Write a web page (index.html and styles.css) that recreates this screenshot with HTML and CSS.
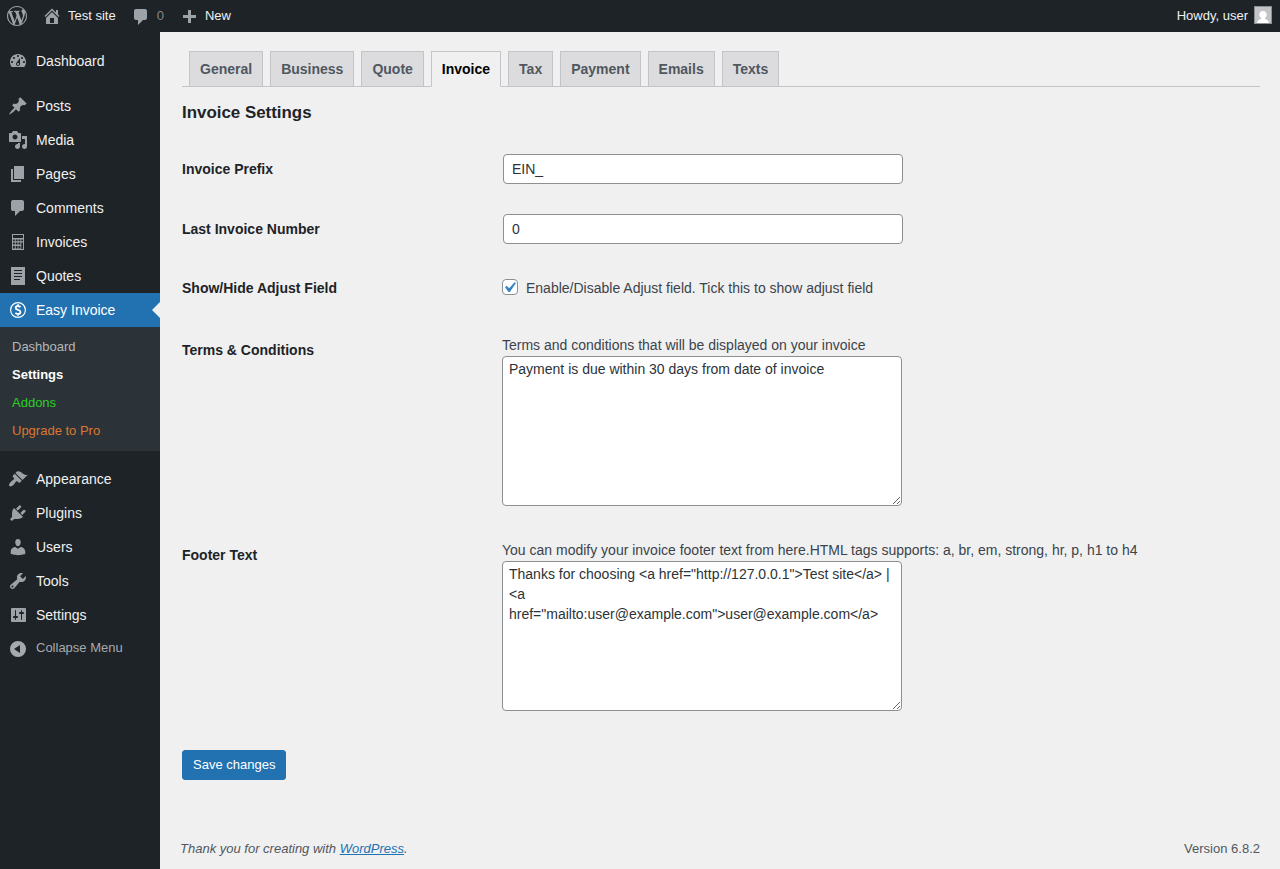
FILE: index.html
```html
<!DOCTYPE html>
<html lang="en">
<head>
<meta charset="utf-8">
<title>Invoice Settings</title>
<link rel="stylesheet" href="styles.css">
</head>
<body>
<header class="adminbar">
  <a class="bar-logo"><svg class="icon" viewBox="0 0 20 20"><path d="M20 10c0-5.51-4.49-10-10-10C4.48 0 0 4.49 0 10c0 5.52 4.48 10 10 10 5.51 0 10-4.48 10-10zM7.78 15.37L4.37 6.22c.55-.02 1.17-.08 1.17-.08.5-.06.44-1.13-.06-1.11 0 0-1.45.11-2.37.11-.18 0-.37 0-.58-.01C4.12 2.69 6.87 1.11 10 1.11c2.33 0 4.45.87 6.05 2.34-.68-.11-1.65.39-1.65 1.58 0 .74.45 1.36.9 2.1.35.61.55 1.36.55 2.46 0 1.49-1.4 5-1.4 5l-3.03-8.37c.54-.02.82-.17.82-.17.5-.05.44-1.25-.06-1.22 0 0-1.44.12-2.38.12-.87 0-2.33-.12-2.33-.12-.5-.03-.56 1.2-.06 1.22l.92.08 1.26 3.41zM17.41 10c.24-.64.74-1.87.43-4.25.7 1.29 1.05 2.71 1.05 4.25 0 3.29-1.73 6.24-4.4 7.78.97-2.59 1.94-5.2 2.92-7.78zM6.1 18.09C3.12 16.65 1.11 13.53 1.11 10c0-1.3.23-2.48.72-3.59C3.25 10.3 4.67 14.2 6.1 18.09zm4.03-6.63l2.58 6.98c-.86.29-1.76.45-2.71.45-.79 0-1.57-.11-2.29-.33.81-2.38 1.62-4.74 2.42-7.1z"/></svg></a>
  <a class="bar-item bar-site"><svg class="icon" viewBox="0 0 20 20"><path d="M16 8.5l1.53 1.53-1.06 1.06L10 4.6l-6.47 6.47-1.06-1.06L10 2.47l4 4V4h2v4.5zm-6-2.46l6 5.99V18H4v-5.97zM12 17v-5H8v5h4z"/></svg><span>Test site</span></a>
  <a class="bar-item bar-comments"><svg class="icon" viewBox="0 0 20 20"><path d="M5 2h9c1.1 0 2 .9 2 2v7c0 1.1-.9 2-2 2h-2l-5 5v-5H5c-1.1 0-2-.9-2-2V4c0-1.1.9-2 2-2z"/></svg><span>0</span></a>
  <a class="bar-item bar-new"><svg class="icon" viewBox="0 0 20 20"><path d="M17 7v3h-5v5H9v-5H4V7h5V2h3v5h5z"/></svg><span>New</span></a>
  <a class="bar-user"><span>Howdy, user</span><svg class="avatar" viewBox="0 0 18 18"><rect x=".5" y=".5" width="17" height="17" fill="#c3c4c7" stroke="#8c8f94"/><path fill="#fff" d="M9 5c2.300 0 3.700 1.500 3.700 3.600 0 1.500-.7 2.700-1.700 3.500v.8c2.200.4 3.600 1.400 4 4.100H3c.4-2.700 1.800-3.700 4-4.100v-.8c-1-.8-1.700-2-1.700-3.500C5.300 6.500 6.700 5 9 5z"/></svg></a>
</header>
<div class="layout">
  <nav class="menu">
    <a class="menu-item"><svg class="icon" viewBox="0 0 20 20"><path d="M3.76 16h12.48c1.1-1.37 1.76-3.11 1.76-5 0-4.42-3.58-8-8-8s-8 3.580-8 8c0 1.890.66 3.630 1.760 5zM10 4c.55 0 1 .45 1 1s-.45 1-1 1-1-.45-1-1 .45-1 1-1zM6 6c.55 0 1 .45 1 1s-.45 1-1 1-1-.45-1-1 .45-1 1-1zm8 0c.55 0 1 .45 1 1s-.45 1-1 1-1-.45-1-1 .45-1 1-1zm-5.370 5.550L12 7v6c0 1.100-.9 2-2 2s-2-.9-2-2c0-.57.24-1.080.63-1.450zM4 10c.55 0 1 .45 1 1s-.45 1-1 1-1-.45-1-1 .45-1 1-1zm12 0c.55 0 1 .45 1 1s-.45 1-1 1-1-.45-1-1 .45-1 1-1zm-5 3c0-.55-.45-1-1-1s-1 .45-1 1 .45 1 1 1 1-.45 1-1z"/></svg>Dashboard</a>
    <div class="separator"></div>
    <a class="menu-item"><svg class="icon" viewBox="0 0 20 20"><path d="M10.44 3.02l1.82-1.82 6.36 6.35-1.83 1.82c-1.05-.68-2.48-.57-3.41.36l-.75.75c-.92.93-1.04 2.35-.35 3.41l-1.83 1.82-2.41-2.41-2.8 2.79c-.42.42-3.38 2.71-3.8 2.29s1.86-3.39 2.28-3.81l2.79-2.79L4.1 9.36l1.83-1.82c1.05.69 2.48.57 3.4-.36l.75-.75c.93-.92 1.05-2.35.36-3.41z"/></svg>Posts</a>
    <a class="menu-item"><svg class="icon" viewBox="0 0 20 20"><path d="M13 11V4c0-.55-.45-1-1-1h-1.67L9 1H5L3.67 3H2c-.55 0-1 .45-1 1v7c0 .55.45 1 1 1h10c.55 0 1-.45 1-1zM7 4.500c1.380 0 2.500 1.120 2.500 2.500S8.380 9.500 7 9.500 4.500 8.380 4.500 7 5.620 4.500 7 4.500zM14 6h5v10.500c0 1.380-1.120 2.500-2.500 2.500S14 17.880 14 16.500s1.120-2.500 2.500-2.500c.17 0 .34.02.5.05V9h-3V6zm-4 8.050V13h2v3.500c0 1.380-1.120 2.500-2.500 2.500S7 17.880 7 16.500 8.120 14 9.500 14c.17 0 .34.02.5.05z"/></svg>Media</a>
    <a class="menu-item"><svg class="icon" viewBox="0 0 20 20"><path d="M6 15V2h10v13H6zm-1 1h8v2H3V5h2v11z"/></svg>Pages</a>
    <a class="menu-item"><svg class="icon" viewBox="0 0 20 20"><path d="M5 2h9c1.1 0 2 .9 2 2v7c0 1.1-.9 2-2 2h-2l-5 5v-5H5c-1.1 0-2-.9-2-2V4c0-1.1.9-2 2-2z"/></svg>Comments</a>
    <a class="menu-item"><svg class="icon" viewBox="0 0 20 20"><path fill-rule="evenodd" d="M4 2h12v16H4zM5 3v3h10V3zM5 7.500v1.700h1.800V7.500zm2.700 0v1.700h1.900V7.500zm2.800 0v1.700h1.900V7.500zm2.800 0v1.700H15V7.500zM5 10.500v1.900h1.800v-1.900zm2.700 0v1.900h1.900v-1.900zm2.800 0v1.900h1.900v-1.900zm2.800 0V17H15v-6.500zM5 14v2.500h1.800V14zm2.700 0v2.500h1.900V14zm2.800 0v2.500h1.900V14z"/></svg>Invoices</a>
    <a class="menu-item"><svg class="icon" viewBox="0 0 20 20"><path fill-rule="evenodd" d="M3 1h14v18H3zM6 4v1h8V4zm0 3v1h8V7zm0 3v1h8v-1zm0 3v1h6v-1z"/></svg>Quotes</a>
    <a class="menu-item current"><svg class="icon" viewBox="0 0 20 20"><g fill="none" stroke="currentColor"><circle cx="10" cy="10" r="7.400" stroke-width="1.200"/><path stroke-width="1.800" d="M12.500 7.300C12 6.400 11.100 6 10 6c-1.500 0-2.300.8-2.300 1.900 0 2.500 4.800 1.500 4.800 4.100 0 1.200-1 2-2.500 2-1.200 0-2.100-.5-2.600-1.300M10 4.200v2M10 13.800v2"/></g></svg>Easy Invoice</a>
    <div class="submenu">
      <a>Dashboard</a>
      <a class="active">Settings</a>
      <a class="addons">Addons</a>
      <a class="upgrade">Upgrade to Pro</a>
    </div>
    <div class="separator"></div>
    <a class="menu-item"><svg class="icon" viewBox="0 0 20 20"><path d="M14.48 11.06L7.41 3.99l1.5-1.5c.5-.56 2.3-.47 3.51.32 1.21.8 1.43 1.28 2.91 2.1 1.18.64 2.45 1.26 4.45.85zm-.71.71L6.7 4.7 4.93 6.47c-.39.39-.39 1.02 0 1.41l1.06 1.06c.39.39.39 1.03 0 1.42-.6.6-1.43 1.11-2.21 1.69-.35.26-.7.53-1.01.84C1.43 14.23.4 16.08 1.4 17.07c.99 1 2.84-.03 4.18-1.36.31-.31.58-.66.85-1.02.57-.78 1.08-1.61 1.69-2.21.39-.39 1.02-.39 1.41 0l1.06 1.06c.39.39 1.02.39 1.41 0z"/></svg>Appearance</a>
    <a class="menu-item"><svg class="icon" viewBox="0 0 20 20"><path d="M13.11 4.36L9.87 7.6 8 5.73l3.24-3.24c.35-.34 1.05-.2 1.56.32.52.51.66 1.21.31 1.55zm-8 1.77l.91-1.12 9.01 9.01-1.19.84c-.71.71-2.63 1.16-3.82 1.16H6.14L4.9 17.26c-.59.59-1.54.59-2.12 0-.59-.58-.59-1.53 0-2.12l1.24-1.24v-3.88c0-1.13.4-3.19 1.09-3.89zm7.26 3.97l3.24-3.24c.34-.35 1.04-.21 1.55.31.52.51.66 1.21.31 1.55l-3.24 3.25z"/></svg>Plugins</a>
    <a class="menu-item"><svg class="icon" viewBox="0 0 20 20"><path d="M10 9.25c-2.27 0-2.73-3.44-2.73-3.44C7 4.02 7.82 2 9.97 2c2.16 0 2.98 2.02 2.71 3.81 0 0-.41 3.44-2.68 3.44zm0 2.57L12.72 10c2.39 0 4.52 2.33 4.52 4.53v2.49s-3.65 1.13-7.24 1.13c-3.65 0-7.24-1.13-7.24-1.13v-2.49c0-2.25 1.94-4.48 4.47-4.48z"/></svg>Users</a>
    <a class="menu-item"><svg class="icon" viewBox="0 0 20 20"><path d="M16.68 9.77c-1.34 1.34-3.3 1.67-4.95.99l-5.41 6.52c-.99.99-2.59.99-3.58 0s-.99-2.59 0-3.57l6.52-5.42c-.68-1.65-.35-3.61.99-4.95 1.28-1.28 3.12-1.62 4.72-1.06l-2.89 2.89 2.82 2.82 2.86-2.87c.53 1.58.18 3.39-1.08 4.65zM3.81 16.21c.4.39 1.04.39 1.43 0 .4-.4.4-1.04 0-1.43-.39-.4-1.03-.4-1.43 0-.39.39-.39 1.03 0 1.43z"/></svg>Tools</a>
    <a class="menu-item"><svg class="icon" viewBox="0 0 20 20"><path d="M18 16V4c0-.55-.45-1-1-1H4c-.55 0-1 .45-1 1v12c0 .55.45 1 1 1h13c.55 0 1-.45 1-1zM8 11h1c.55 0 1 .45 1 1s-.45 1-1 1H8v1.500c0 .28-.22.5-.5.5s-.5-.22-.5-.5V13H6c-.55 0-1-.45-1-1s.45-1 1-1h1V5.500c0-.28.22-.5.5-.5s.5.22.5.5V11zm5-2h-1c-.55 0-1-.45-1-1s.45-1 1-1h1V5.500c0-.28.22-.5.5-.5s.5.22.5.5V7h1c.55 0 1 .45 1 1s-.45 1-1 1h-1v5.500c0 .28-.22.5-.5.5s-.5-.22-.5-.5V9z"/></svg>Settings</a>
    <a class="menu-item collapse"><svg class="icon" viewBox="0 0 20 20"><path fill-rule="evenodd" d="M10 2a8 8 0 1 1 0 16a8 8 0 0 1 0-16zM12 6l-6 4 6 4z"/></svg><span>Collapse Menu</span></a>
  </nav>
  <main class="content">
    <div class="tabs">
      <a class="tab">General</a><a class="tab">Business</a><a class="tab">Quote</a><a class="tab selected">Invoice</a><a class="tab">Tax</a><a class="tab">Payment</a><a class="tab">Emails</a><a class="tab">Texts</a>
    </div>
    <h2 class="title">Invoice Settings</h2>
    <form class="form">
      <div class="row row-input"><label class="label">Invoice Prefix</label><div class="field"><input class="text" type="text" value="EIN_"></div></div>
      <div class="row row-input"><label class="label">Last Invoice Number</label><div class="field"><input class="text" type="text" value="0"></div></div>
      <div class="row row-check"><label class="label">Show/Hide Adjust Field</label><div class="field"><span class="check"><svg class="tick" viewBox="0 0 20 20"><path d="M14.83 4.89l1.34.94-5.81 8.38H9.02L5.78 9.67l1.34-1.25 2.57 2.4z"/></svg></span><span class="desc">Enable/Disable Adjust field. Tick this to show adjust field</span></div></div>
      <div class="row row-area"><label class="label">Terms &amp; Conditions</label><div class="field"><div class="desc">Terms and conditions that will be displayed on your invoice</div><textarea class="area" spellcheck="false">Payment is due within 30 days from date of invoice</textarea></div></div>
      <div class="row row-area"><label class="label">Footer Text</label><div class="field"><div class="desc">You can modify your invoice footer text from here.HTML tags supports: a, br, em, strong, hr, p, h1 to h4</div><textarea class="area" spellcheck="false">Thanks for choosing &lt;a href="http://127.0.0.1"&gt;Test site&lt;/a&gt; | &lt;a href="mailto:user@example.com"&gt;user@example.com&lt;/a&gt;</textarea></div></div>
      <button class="save" type="button">Save changes</button>
    </form>
    <footer class="footer"><span class="thanks">Thank you for creating with <a class="link">WordPress</a>.</span><span>Version 6.8.2</span></footer>
  </main>
</div>
</body>
</html>
```
FILE: styles.css
```css
* { box-sizing: border-box; }
body {
  margin: 0;
  height: 869px;
  overflow: hidden;
  display: flex;
  flex-direction: column;
  background: #f0f0f1;
  color: #3c434a;
  font: 14px/20px "Liberation Sans", Arial, sans-serif;
}
.icon { width: 20px; height: 20px; fill: currentColor; flex: none; display: block; }

.adminbar {
  height: 32px;
  flex: none;
  display: flex;
  background: #1d2327;
  color: #f0f0f1;
  font-size: 13px;
  line-height: 32px;
}
.adminbar .icon { color: #9ca2a7; margin-top: 6px; }
.bar-logo { width: 35px; padding-left: 7px; }
.bar-item { display: flex; }
.bar-site { padding-left: 7px; gap: 6px; }
.bar-comments { padding-left: 15px; gap: 6px; color: #84878a; }
.bar-new { padding-left: 15px; gap: 6px; }
.adminbar .bar-comments .icon { margin-top: 7px; }
.adminbar .bar-new .icon { margin-top: 8px; }
.bar-user { display: flex; gap: 6px; margin-left: auto; padding-right: 8px; }
.avatar { width: 18px; height: 18px; margin-top: 6px; }

.layout { flex: 1; display: flex; min-height: 0; }
.menu { width: 160px; flex: none; padding-top: 12px; background: #1d2327; color: #f0f0f1; }
.menu-item { display: flex; gap: 8px; height: 34px; padding: 7px 0 0 8px; }
.menu-item .icon { color: #9ca2a7; }
.separator { height: 11px; }
.current { position: relative; background: #2271b1; color: #fff; }
.menu-item.current .icon { color: #fff; }
.current::after {
  content: "";
  position: absolute;
  right: 0;
  top: 9px;
  border: 8px solid transparent;
  border-left: 0;
  border-right-color: #f0f0f1;
}
.submenu { padding: 6px 0; background: #2c3338; font-size: 13px; color: #b4b7b9; }
.submenu a { display: block; height: 28px; padding: 4px 12px; }
.submenu .active { color: #fff; font-weight: bold; }
.submenu .addons { color: #2bcf24; }
.submenu .upgrade { color: #dd7631; }
.collapse { font-size: 13px; color: #a7aaad; }
.menu-item.collapse .icon { color: #a7aaad; }
.collapse span { margin-top: -1px; }

.content { flex: 1; display: flex; flex-direction: column; padding: 19px 20px 10px 22px; }
.tabs { display: flex; height: 36px; border-bottom: 1px solid #c3c4c7; }
.tab {
  height: 36px;
  margin: 0 0 -1px 7px;
  padding: 5px 10px;
  border: 1px solid #c3c4c7;
  background: #dcdcde;
  color: #50575e;
  font-weight: bold;
  line-height: 24px;
}
.selected { background: #f0f0f1; border-bottom-color: #f0f0f1; color: #000; }
.title { margin: 16px 0; font-size: 16.9px; line-height: 20px; color: #1d2327; }
.row { display: grid; grid-template-columns: 320px 1fr; }
.row-input { height: 60px; }
.row-check { height: 62px; }
.row-area { height: 205px; }
.label { padding-top: 20px; line-height: 18px; font-weight: bold; color: #1d2327; }
.row-input .label { padding-top: 21px; }
.field { padding-top: 15px; }
.row-area .field { padding-top: 14px; }
.row-area .desc { margin-bottom: 1px; }
.text {
  display: block;
  width: 400px;
  height: 30px;
  margin: 0 1px;
  padding: 0 8px;
  border: 1px solid #8c8f94;
  border-radius: 4px;
  background: #fff;
  color: #2c3338;
  font: inherit;
}
.row-check .field { display: flex; gap: 8px; padding-top: 19px; }
.check { width: 16px; height: 16px; margin-top: 1px; border: 1px solid #8c8f94; border-radius: 4px; background: #fff; }
.tick { display: block; width: 21px; height: 21px; margin: -3px 0 0 -4px; fill: #3582c4; }
.area {
  display: block;
  width: 400px;
  height: 150px;
  margin: 0;
  padding: 2px 6px;
  border: 1px solid #8c8f94;
  border-radius: 4px;
  background: #fff;
  color: #2c3338;
  font: inherit;
  resize: both;
  overflow: auto;
}
.save {
  display: block;
  height: 30px;
  margin-top: 19px;
  padding: 0 10px;
  border: 1px solid #2271b1;
  border-radius: 3px;
  background: #2271b1;
  color: #fff;
  font: 13px/28px "Liberation Sans", Arial, sans-serif;
}
.footer { display: flex; justify-content: space-between; margin: auto 0 0 -2px; font-size: 13px; color: #50575e; }
.thanks { font-style: italic; }
.link { color: #2271b1; text-decoration: underline; }
```
